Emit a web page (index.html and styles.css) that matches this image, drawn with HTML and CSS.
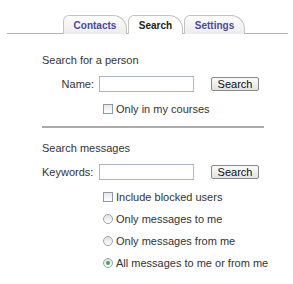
FILE: index.html
```html
<!DOCTYPE html>
<html>
<head>
    <meta charset="UTF-8">
    <title>Messages</title>
    <link rel="stylesheet" href="styles.css">
</head>
<body>
<div class="tabrow">
    <div class="tab">Contacts</div>
    <div class="tab active">Search</div>
    <div class="tab">Settings</div>
</div>

<div class="content">
    <div class="section">
        <div class="heading">Search for a person</div>
        <div class="row">
            <label class="lbl name">Name:</label>
            <input type="text" class="field">
            <button class="btn">Search</button>
        </div>
        <div class="opts">
            <label class="opt"><span class="box"></span>Only in my courses</label>
        </div>
    </div>

    <hr class="sep">

    <div class="section">
        <div class="heading">Search messages</div>
        <div class="row">
            <label class="lbl">Keywords:</label>
            <input type="text" class="field">
            <button class="btn">Search</button>
        </div>
        <div class="opts">
            <label class="opt"><span class="box"></span>Include blocked users</label>
            <label class="opt"><span class="radio"></span>Only messages to me</label>
            <label class="opt"><span class="radio"></span>Only messages from me</label>
            <label class="opt"><span class="radio on"></span>All messages to me or from me</label>
        </div>
    </div>
</div>
</body>
</html>
```

FILE: styles.css
```css
body {
    margin: 0;
    background-color: #fff;
    color: #333;
    font-family: "Liberation Sans", Arial, sans-serif;
    font-size: 11px;
}

.tabrow {
    display: flex;
    margin: 15px 5px 0 7px;
    padding-left: 56px;
    border-bottom: 1px solid #b4b4b4;
    height: 18px;
}

.tab {
    box-sizing: border-box;
    height: 19px;
    padding-top: 4px;
    text-align: center;
    font-weight: bold;
    font-size: 10px;
    color: #4a4a9a;
    border: 1px solid #c4c4c4;
    border-bottom: none;
    border-radius: 6px 14px 0 0;
    background: linear-gradient(#fdfdfd, #ececec);
    margin-right: 1px;
}

.tab:nth-child(1) { width: 64px; }
.tab:nth-child(2) { width: 55px; }
.tab:nth-child(3) { width: 61px; }

.tab.active {
    color: #222;
    background: #fff;
    position: relative;
    z-index: 1;
}

.content {
    margin: 20px 0 0 42px;
    width: 222px;
}

.heading {
    height: 14px;
}

.row {
    display: flex;
    align-items: center;
    margin-top: 8px;
    height: 16px;
}

.lbl {
    width: 57px;
}

.lbl.name {
    text-align: right;
    padding-right: 5px;
    width: 52px;
}

.field {
    box-sizing: border-box;
    width: 95px;
    height: 16px;
    margin: 0;
    border: 1px solid #a8b8cc;
    padding: 1px 3px;
}

.btn {
    box-sizing: border-box;
    margin-left: 17px;
    width: 48px;
    height: 14px;
    padding: 0;
    font-family: "Liberation Sans", Arial, sans-serif;
    font-size: 11px;
    color: #111;
    border: 1px solid #8a8a8a;
    border-radius: 2px;
    background: linear-gradient(#fafafa, #e2e2e2);
}

.opts {
    display: flex;
    flex-direction: column;
    gap: 10px;
    margin-top: 11px;
    padding-left: 61px;
}

.opt {
    display: flex;
    align-items: center;
    height: 12px;
    white-space: nowrap;
}

.box {
    box-sizing: border-box;
    flex: none;
    width: 10px;
    height: 10px;
    border: 1px solid #8c9aae;
    background: linear-gradient(#e8e8e8, #fff);
    margin-right: 3px;
}

.radio {
    box-sizing: border-box;
    flex: none;
    width: 10px;
    height: 10px;
    border: 1px solid #9aa4b4;
    border-radius: 50%;
    background: linear-gradient(#e0e0e0, #fff);
    margin-right: 3px;
    position: relative;
}

.radio.on::after {
    content: "";
    position: absolute;
    left: 2px;
    top: 2px;
    width: 4px;
    height: 4px;
    border-radius: 50%;
    background: #3cb43c;
}

.sep {
    border: none;
    border-top: 2px solid #ababab;
    margin: 11px 0 14px 0;
    width: 222px;
}
```
